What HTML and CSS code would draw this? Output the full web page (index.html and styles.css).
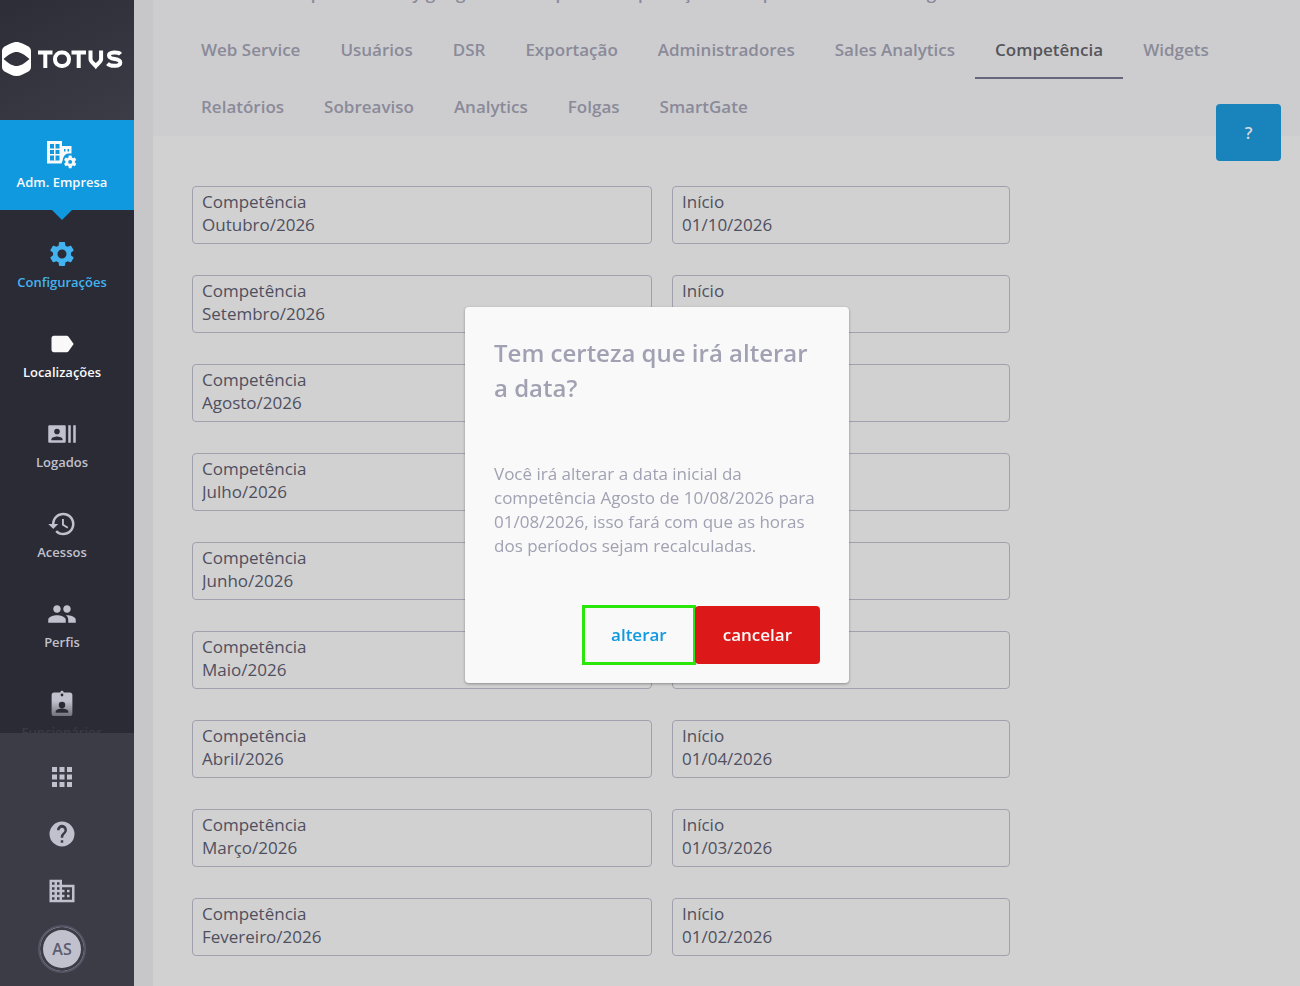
FILE: index.html
```html
<!DOCTYPE html>
<html lang="pt-BR">
<head>
<meta charset="utf-8">
<meta name="viewport" content="width=device-width, initial-scale=1">
<title>TOTVS - Competência</title>
<link rel="stylesheet" href="styles.css">
</head>
<body>
<div class="app">
  <aside class="sidebar">
    <div class="logo">
      <svg width="122" height="36" viewBox="0 0 122 36" role="img" aria-label="TOTVS">
        <path fill="#fff" fill-rule="evenodd" d="M14.500 1c2 0 4 .6 6 1.500l5 2.500c2 1 3.500 2.500 3.500 5v16c0 2.500-1.500 4-3.500 5l-5 2.500c-4 2-8 2-12 0l-5-2.500c-2-1-3.500-2.500-3.500-5V10c0-2.500 1.500-4 3.500-5l5-2.500c2-.9 4-1.500 6-1.500zM1.500 18c6 5 9 7 13 7s7-2 13-7c-6-5-9-7-13-7s-7 2-13 7z"/>
        <g fill="none" stroke="#fff" stroke-width="4">
          <path d="M36 11.500h14.500M43.300 11v16M69.500 11.500h14.500M76.700 11v16"/>
          <rect x="53" y="11.500" width="14" height="13.500" rx="6.500"/>
          <path d="M88.500 9.500v8.500c0 3 3.300 4.500 5.300 7c2-2.500 5.300-4 5.300-7V9.500"/>
          <path d="M118.500 13.200c-2-2.300-11.500-2.500-11.500 1.200 0 5.300 11.300 2 11.300 7 0 4.300-9.800 4.300-12.800 1.200"/>
        </g>
      </svg>
    </div>
    <nav class="menu">
      <a class="item item-current" href="#">
        <svg class="icon" width="30" height="28" viewBox="0 0 30 28"><path fill="currentColor" fill-rule="evenodd" d="M0 0h15v5h9.500v7.500h-3.500c-3 .5-5 3-5.500 7.500l-1 2.500H0zM3 3v16.500h9.500V3zM17 8v2.500h1.500V8zm3.500 0v2.500H22V8z"/><path fill="currentColor" d="M7 3h1.500v16.500H7zM3 7.500h10V9H3zM3 13h10v1.500H3z"/><g transform="translate(13.500 12.500) scale(.7)"><path fill="currentColor" d="M20.500 13c0-.7 0-1.400-.1-2l2.100-1.700-2-3.500-2.600 1a8 8 0 0 0-1.700-1L15.800 3h-4l-.4 2.800c-.6.3-1.200.6-1.700 1l-2.600-1-2 3.500L7.200 11a8 8 0 0 0 0 2l-2.100 1.700 2 3.500 2.600-1c.5.400 1.100.7 1.700 1l.4 2.800h4l.4-2.800c.6-.3 1.200-.6 1.700-1l2.600 1 2-3.500zM13.800 14.800a2.800 2.800 0 1 1 0-5.600 2.800 2.800 0 0 1 0 5.600z"/></g></svg>
        <span>Adm. Empresa</span>
      </a>
      <a class="item item-active" href="#">
        <svg class="icon" width="30" height="30" viewBox="0 0 24 24"><path fill="currentColor" d="M19.140 12.940c.04-.3.060-.61.060-.94s-.02-.64-.07-.94l2.030-1.580a.49.49 0 0 0 .12-.61l-1.920-3.320a.488.488 0 0 0-.59-.22l-2.390.96c-.5-.38-1.030-.7-1.620-.94l-.36-2.540a.484.484 0 0 0-.48-.41h-3.840c-.24 0-.43.17-.47.41l-.36 2.540c-.59.24-1.130.57-1.620.94l-2.390-.96a.48.48 0 0 0-.59.220L2.740 8.870c-.12.210-.08.470.12.610l2.030 1.580c-.05.3-.09.630-.09.940s.02.640.07.940l-2.030 1.580a.49.49 0 0 0-.12.610l1.920 3.320c.12.220.37.290.59.220l2.390-.96c.5.380 1.030.7 1.620.94l.36 2.540c.05.240.24.410.48.410h3.840c.24 0 .44-.17.470-.41l.36-2.540c.59-.24 1.130-.56 1.620-.94l2.390.96c.22.080.47 0 .59-.22l1.920-3.320a.48.48 0 0 0-.12-.61zM12 15.600a3.600 3.600 0 1 1 0-7.200 3.600 3.600 0 0 1 0 7.200z"/></svg>
        <span>Configurações</span>
      </a>
      <a class="item item-bright" href="#">
        <svg class="icon" width="28" height="30" viewBox="0 0 24 24"><path fill="currentColor" d="M17.630 5.840C17.270 5.330 16.670 5 16 5L5 5.010C3.900 5.010 3 5.900 3 7v10c0 1.100.9 1.990 2 1.990L16 19c.67 0 1.270-.33 1.630-.84L22 12z"/></svg>
        <span>Localizações</span>
      </a>
      <a class="item" href="#">
        <svg class="icon" width="30" height="30" viewBox="0 0 24 24"><path fill="currentColor" fill-rule="evenodd" d="M21 5h2v14h-2zM17 5h2v14h-2zM2 5h12c.55 0 1 .45 1 1v12c0 .55-.45 1-1 1H2c-.55 0-1-.45-1-1V6c0-.55.450-1 1-1zM8 7.750a2.250 2.250 0 1 0 0 4.500 2.250 2.250 0 0 0 0-4.500zM12.500 17v-.75c0-1.500-3-2.250-4.500-2.250s-4.500.75-4.500 2.250V17z"/></svg>
        <span>Logados</span>
      </a>
      <a class="item" href="#">
        <svg class="icon" width="30" height="30" viewBox="0 0 24 24"><path fill="currentColor" d="M13 3a9 9 0 0 0-9 9H1l3.890 3.890.07.140L9 12H6c0-3.870 3.130-7 7-7s7 3.130 7 7-3.130 7-7 7c-1.930 0-3.680-.79-4.940-2.060l-1.420 1.420A8.954 8.954 0 0 0 13 21a9 9 0 0 0 0-18zm-1 5v5l4.280 2.540.72-1.210-3.500-2.080V8z"/></svg>
        <span>Acessos</span>
      </a>
      <a class="item" href="#">
        <svg class="icon" width="30" height="30" viewBox="0 0 24 24"><path fill="currentColor" d="M16 11c1.660 0 2.990-1.340 2.990-3S17.660 5 16 5s-3 1.340-3 3 1.340 3 3 3zm-8 0c1.660 0 2.990-1.340 2.990-3S9.660 5 8 5 5 6.340 5 8s1.340 3 3 3zm0 2c-2.330 0-7 1.170-7 3.500V19h14v-2.500c0-2.330-4.670-3.500-7-3.500zm8 0c-.29 0-.62.020-.97.050 1.160.84 1.970 1.970 1.970 3.450V19h6v-2.500c0-2.330-4.670-3.500-7-3.500z"/></svg>
        <span>Perfis</span>
      </a>
      <a class="item" href="#">
        <svg class="icon" width="28" height="30" viewBox="0 0 24 26"><path fill="currentColor" fill-rule="evenodd" d="M19 3h-5.500C13.300 2 12.800 1.500 12 1.500s-1.300.5-1.500 1.500H5c-1.100 0-2 .9-2 2v16.500c0 1.100.9 2 2 2h14c1.100 0 2-.9 2-2V5c0-1.100-.9-2-2-2zm-7 1a1.200 1.200 0 1 1 0 2.400A1.200 1.200 0 0 1 12 4zm0 7a2.800 2.800 0 1 1 0 5.600 2.800 2.800 0 0 1 0-5.600zm5.500 9.500h-11v-1c0-1.600 3.500-2.500 5.500-2.500s5.500.9 5.500 2.500z"/></svg>
        <span>Funcionários</span>
      </a>
    </nav>
    <div class="tools">
      <button class="tool" type="button" aria-label="Aplicativos"><svg width="30" height="30" viewBox="0 0 24 24"><path fill="currentColor" d="M4 8h4V4H4zm6 12h4v-4h-4zm-6 0h4v-4H4zm0-6h4v-4H4zm6 0h4v-4h-4zm6-10v4h4V4zm-6 4h4V4h-4zm6 6h4v-4h-4zm0 6h4v-4h-4z"/></svg></button>
      <button class="tool" type="button" aria-label="Ajuda"><svg width="30" height="30" viewBox="0 0 24 24"><path fill="currentColor" d="M12 2a10 10 0 1 0 0 20 10 10 0 0 0 0-20zm1 17h-2v-2h2zm2.070-7.750-.9.920C13.450 12.900 13 13.500 13 15h-2v-.5c0-1.100.45-2.100 1.170-2.830l1.240-1.260A2 2 0 1 0 10 9H8a4 4 0 1 1 7.070 2.250z"/></svg></button>
      <button class="tool" type="button" aria-label="Empresa"><svg width="30" height="30" viewBox="0 0 24 24"><path fill="currentColor" d="M12 7V3H2v18h20V7zM6 19H4v-2h2zm0-4H4v-2h2zm0-4H4V9h2zm0-4H4V5h2zm4 12H8v-2h2zm0-4H8v-2h2zm0-4H8V9h2zm0-4H8V5h2zm10 12h-8v-2h2v-2h-2v-2h2v-2h-2V9h8zm-2-8h-2v2h2zm0 4h-2v2h2z"/></svg></button>
      <button class="avatar" type="button">AS</button>
    </div>
  </aside>

  <main class="page">
    <div class="panel">
      <nav class="tabs">
        <div class="tab-row tab-row-first"><a class="tab" href="#">Geral</a><a class="tab" href="#">Empresa</a><a class="tab" href="#">My google</a><a class="tab" href="#">Tempo</a><a class="tab" href="#">Importação</a><a class="tab" href="#">Aparelhos</a><a class="tab" href="#">Catálogo</a></div>
        <div class="tab-row"><a class="tab" href="#">Web Service</a><a class="tab" href="#">Usuários</a><a class="tab" href="#">DSR</a><a class="tab" href="#">Exportação</a><a class="tab" href="#">Administradores</a><a class="tab" href="#">Sales Analytics</a><a class="tab tab-active" href="#" aria-current="page">Competência</a><a class="tab" href="#">Widgets</a></div>
        <div class="tab-row"><a class="tab" href="#">Relatórios</a><a class="tab" href="#">Sobreaviso</a><a class="tab" href="#">Analytics</a><a class="tab" href="#">Folgas</a><a class="tab" href="#">SmartGate</a></div>
      </nav>
      <form class="periods">
        <label class="field"><span>Competência</span><input type="text" value="Outubro/2026" readonly></label>
        <label class="field"><span>Início</span><input type="text" value="01/10/2026"></label>
        <label class="field"><span>Competência</span><input type="text" value="Setembro/2026" readonly></label>
        <label class="field"><span>Início</span><input type="text" value="01/09/2026"></label>
        <label class="field"><span>Competência</span><input type="text" value="Agosto/2026" readonly></label>
        <label class="field"><span>Início</span><input type="text" value="01/08/2026"></label>
        <label class="field"><span>Competência</span><input type="text" value="Julho/2026" readonly></label>
        <label class="field"><span>Início</span><input type="text" value="01/07/2026"></label>
        <label class="field"><span>Competência</span><input type="text" value="Junho/2026" readonly></label>
        <label class="field"><span>Início</span><input type="text" value="01/06/2026"></label>
        <label class="field"><span>Competência</span><input type="text" value="Maio/2026" readonly></label>
        <label class="field"><span>Início</span><input type="text" value="01/05/2026"></label>
        <label class="field"><span>Competência</span><input type="text" value="Abril/2026" readonly></label>
        <label class="field"><span>Início</span><input type="text" value="01/04/2026"></label>
        <label class="field"><span>Competência</span><input type="text" value="Março/2026" readonly></label>
        <label class="field"><span>Início</span><input type="text" value="01/03/2026"></label>
        <label class="field"><span>Competência</span><input type="text" value="Fevereiro/2026" readonly></label>
        <label class="field"><span>Início</span><input type="text" value="01/02/2026"></label>
      </form>
    </div>
    <button class="help" type="button">?</button>
  </main>
</div>

<div class="overlay">
  <section class="dialog" role="dialog" aria-modal="true" aria-labelledby="dialog-title">
    <h2 class="dialog-title" id="dialog-title">Tem certeza que irá alterar a data?</h2>
    <p class="dialog-text">Você irá alterar a data inicial da competência Agosto de 10/08/2026 para 01/08/2026, isso fará com que as horas dos períodos sejam recalculadas.</p>
    <div class="dialog-actions">
      <button class="btn btn-change" type="button">alterar</button>
      <button class="btn btn-cancel" type="button">cancelar</button>
    </div>
  </section>
</div>
</body>
</html>
```
FILE: styles.css
```css
* {
  box-sizing: border-box;
}

body {
  margin: 0;
  font-family: "Open Sans", "Noto Sans", sans-serif;
  font-size: 17px;
  color: #4f4f60;
  background: #c7c7c9;
}

button,
input {
  font: inherit;
  color: inherit;
}

a {
  color: inherit;
  text-decoration: none;
}

.app {
  display: flex;
  height: 100vh;
  overflow: hidden;
}

.sidebar {
  display: flex;
  flex-direction: column;
  flex: 0 0 134px;
  color: #c1c1cd;
  background: #2b2b35;
}

.logo {
  flex: none;
  height: 120px;
  padding: 41px 0 0 2px;
  background: linear-gradient(155deg, #2d2d37, #3c3c47);
}

.menu {
  position: relative;
  flex: 1;
  min-height: 0;
  overflow: hidden;
}

.menu::after {
  content: "";
  position: absolute;
  inset: auto 0 0;
  height: 32px;
  background: linear-gradient(#2b2b3500, #2b2b35e6 80%);
}

.item {
  position: relative;
  display: flex;
  flex-direction: column;
  align-items: center;
  height: 90px;
  padding: 19px 10px 0 0;
  font-size: 13px;
  font-weight: 600;
  line-height: 18px;
}

.icon {
  height: 30px;
  margin-bottom: 4px;
}

.item-current {
  color: #f9f9f9;
  background: #1199df;
}

.item-current .icon {
  padding-top: 2px;
}

.item-current::after {
  content: "";
  position: absolute;
  top: 100%;
  left: 52px;
  border: 10px solid transparent;
  border-top-color: #1199df;
  border-bottom: 0;
}

.item-current + .item {
  margin-top: 10px;
}

.item-active {
  color: #42b3f0;
}

.item-bright {
  color: #f9f9f9;
}

.tools {
  display: flex;
  flex-direction: column;
  align-items: center;
  flex: none;
  padding: 15px 10px 13px 0;
  background: #3c3c47;
}

.tool {
  display: grid;
  place-items: center;
  width: 58px;
  height: 57px;
  padding: 0;
  border: 0;
  background: none;
}

.avatar {
  width: 48px;
  height: 48px;
  margin-top: 6px;
  padding: 0;
  border: 2px solid #555566;
  border-radius: 50%;
  font-size: 16px;
  font-weight: 600;
  color: #5c5c70;
  background: #c1c1cd;
  box-shadow: inset 0 0 0 3px #3c3c47;
}

.page {
  position: relative;
  flex: 1;
  min-width: 0;
  padding-left: 19px;
}

.panel {
  min-height: 100%;
  background: #d1d1d1;
}

.tabs {
  padding: 0 28px;
  background: #cdcdcf;
}

.tab-row {
  display: flex;
  height: 57px;
}

.tab-row-first {
  height: 22px;
  align-items: flex-end;
}

.tab {
  flex: none;
  height: 57px;
  padding: 16px 20px 0;
  font-weight: 600;
  line-height: 24px;
  color: #8a8a99;
}

.tab-active {
  color: #55555a;
  border-bottom: 2px solid #66667d;
}

.periods {
  display: grid;
  grid-template-columns: minmax(0, 460fr) minmax(0, 338fr);
  gap: 31px 20px;
  max-width: 857px;
  padding: 50px 0 31px 39px;
}

.field {
  display: flex;
  flex-direction: column;
  height: 58px;
  padding: 3px 9px;
  border: 1px solid #a1a1ae;
  border-radius: 4px;
  line-height: 23px;
}

.field input {
  width: 100%;
  height: 23px;
  padding: 0;
  border: 0;
  outline: 0;
  background: none;
}

.help {
  position: absolute;
  top: 104px;
  right: 19px;
  width: 65px;
  height: 57px;
  border: 0;
  border-radius: 4px;
  font-weight: 600;
  color: #d6d9db;
  background: #1983bb;
}

.overlay {
  position: fixed;
  inset: 0;
  display: grid;
  place-items: center;
  padding: 4px 0 0 14px;
}

.dialog {
  width: 384px;
  padding: 28px 29px 19px;
  border-radius: 4px;
  color: #a1a1b3;
  background: #f9f9f9;
  box-shadow: 0 1px 3px #00000055;
}

.dialog-title {
  margin: 0 0 57px;
  font-size: 24px;
  font-weight: 600;
  line-height: 35px;
}

.dialog-text {
  margin: 0 0 48px;
  line-height: 24px;
}

.dialog-actions {
  display: flex;
  justify-content: flex-end;
}

.btn {
  height: 58px;
  padding: 0 28px 2px;
  border: 0;
  border-radius: 4px;
  font-weight: 600;
}

.btn-change {
  border-radius: 0;
  color: #1199df;
  background: #f9f9f9;
  outline: 3px solid #2be60a;
  outline-offset: -2px;
}

.btn-cancel {
  color: #f9f9f9;
  background: #dd1818;
}
```
